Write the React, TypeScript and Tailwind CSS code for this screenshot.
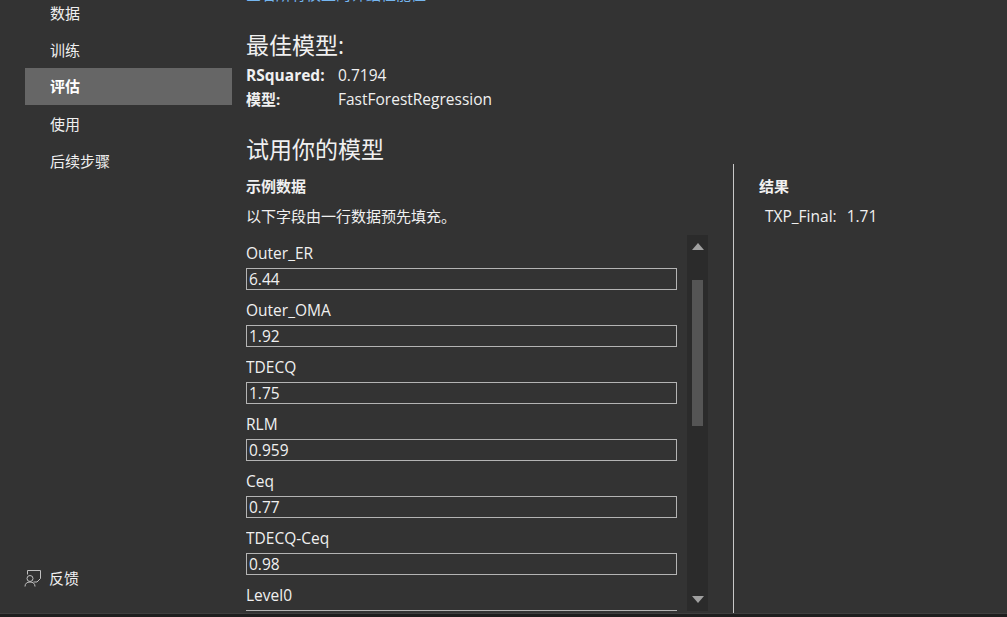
const fields = [
  { label: 'Outer_ER', value: '6.44' },
  { label: 'Outer_OMA', value: '1.92' },
  { label: 'TDECQ', value: '1.75' },
  { label: 'RLM', value: '0.959' },
  { label: 'Ceq', value: '0.77' },
  { label: 'TDECQ-Ceq', value: '0.98' },
  { label: 'Level0', value: '' },
]

const navItems = ['数据', '训练', '评估', '使用', '后续步骤']

function FeedbackIcon() {
  return (
    <svg width="18" height="18" viewBox="0 0 18 18" fill="none" stroke="#c0c0c0" strokeWidth="1">
      <path d="M4.5 5.5V1.5H17.5V9.5L14 13H10.5" />
      <circle cx="7" cy="9.5" r="3" />
      <path d="M2 17.5C2 14.5 4 13 7 13C10 13 12 14.5 12 17.5" />
    </svg>
  )
}

export default function App() {
  return (
    <div className="flex h-[617px] w-[1007px] flex-col overflow-hidden bg-[#333333] font-['Open_Sans','Noto_Sans_CJK_SC',sans-serif] text-[15px] text-[#f0f0f0]">
      <div className="flex min-h-0 flex-1">
        {/* Sidebar */}
        <aside className="flex w-[232px] shrink-0 flex-col justify-between pl-[25px]">
          <nav className="-mt-[6px] flex flex-col">
            {navItems.map((item) => (
              <div
                key={item}
                className={`flex h-[37px] items-center pl-[25px] ${item === '评估' ? 'bg-[#666666] font-bold text-white' : 'pt-[1px]'}`}
              >
                {item}
              </div>
            ))}
          </nav>
          <div className="-ml-[2px] mb-[24px] flex items-center gap-[8px]">
            <FeedbackIcon />
            <span>反馈</span>
          </div>
        </aside>

        {/* Main */}
        <main className="flex min-w-0 flex-1 flex-col pl-[14px]">
          <div className="-mt-[16px] h-[20px] leading-[20px] text-[#75b6f0]">查看所有模型的详细性能值</div>
          <h2 className="mt-[26px] text-[23px] leading-[30px] font-normal">最佳模型:</h2>
          <div className="mt-[3px] flex h-[24px] items-center pt-[1px]">
            <span className="w-[92px] text-[15.5px] font-bold">RSquared:</span>
            <span className="text-[15.5px]">0.7194</span>
          </div>
          <div className="flex h-[25px] items-center">
            <span className="w-[92px] font-bold">模型:</span>
            <span className="text-[15.5px]">FastForestRegression</span>
          </div>
          <h2 className="mt-[22px] text-[23px] leading-[30px] font-normal">试用你的模型</h2>

          <div className="flex min-h-0 flex-1">
            {/* Sample data */}
            <section className="flex w-[488px] shrink-0 flex-col border-r border-[#c8c8c8] pt-[11px]">
              <h3 className="text-[15px] leading-[22px] font-bold">示例数据</h3>
              <p className="mt-[8px] leading-[22px]">以下字段由一行数据预先填充。</p>
              <div className="mt-[8px] flex min-h-0 flex-1 pb-[2px]">
                <div className="w-[431px] shrink-0 overflow-hidden pt-[7px]">
                  {fields.map((f) => (
                    <div key={f.label} className="h-[57px] text-[15.5px]">
                      <label className="block h-[26px] leading-[22px]">{f.label}</label>
                      <div className="flex h-[22px] items-center border border-[#b4b4b4] pt-[1px] pl-[2px] leading-none">{f.value}</div>
                    </div>
                  ))}
                </div>
                <div className="ml-[10px] flex w-[21px] flex-col items-center justify-between bg-[#2b2b2b] py-[8px]">
                  <div className="h-0 w-0 border-x-[6px] border-b-[7px] border-x-transparent border-b-[#a0a0a0]" />
                  <div className="mb-auto mt-[30px] h-[146px] w-[11px] bg-[#555555]" />
                  <div className="h-0 w-0 border-x-[6px] border-t-[7px] border-x-transparent border-t-[#a0a0a0]" />
                </div>
              </div>
            </section>

            {/* Results */}
            <section className="flex-1 pt-[11px] pl-[25px]">
              <h3 className="text-[15px] leading-[22px] font-bold">结果</h3>
              <div className="mt-[8px] flex gap-[10px] pl-[6px] text-[15.5px] leading-[22px]">
                <span>TXP_Final:</span>
                <span>1.71</span>
              </div>
            </section>
          </div>
        </main>
      </div>
      <div className="h-[4px] shrink-0 border-t border-[#3f3f3f] bg-[#1e1e1e]" />
    </div>
  )
}
